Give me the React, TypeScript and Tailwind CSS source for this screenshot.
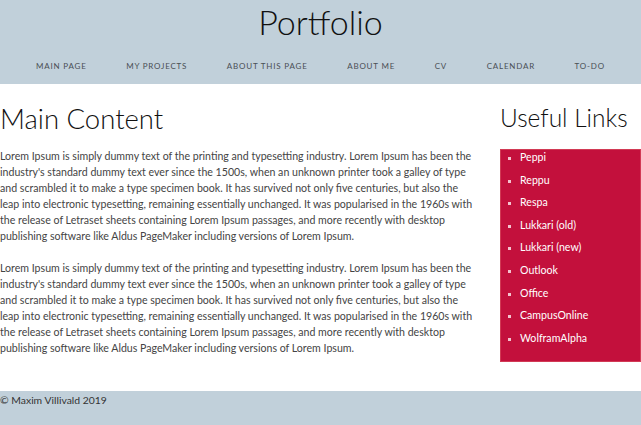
import React from 'react';

const navItems = ['Main page', 'My projects', 'About this page', 'About me', 'CV', 'Calendar', 'To-do'];

const links = ['Peppi', 'Reppu', 'Respa', 'Lukkari (old)', 'Lukkari (new)', 'Outlook', 'Office', 'CampusOnline', 'WolframAlpha'];

const lorem =
  "Lorem Ipsum is simply dummy text of the printing and typesetting industry. Lorem Ipsum has been the industry's standard dummy text ever since the 1500s, when an unknown printer took a galley of type and scrambled it to make a type specimen book. It has survived not only five centuries, but also the leap into electronic typesetting, remaining essentially unchanged. It was popularised in the 1960s with the release of Letraset sheets containing Lorem Ipsum passages, and more recently with desktop publishing software like Aldus PageMaker including versions of Lorem Ipsum.";

export default function App() {
  return (
    <div className="w-[641px] h-[425px] overflow-hidden bg-white text-[#333] font-['Lato','Liberation_Sans',sans-serif]">
      <header className="h-[84px] bg-[#c1d0da]">
        <h1 className="pt-[2px] text-center text-[34px] leading-[40px] font-light text-[#111]">Portfolio</h1>
        <nav className="mt-[18px] flex justify-between px-[36px] text-[8px] leading-[12px] tracking-[0.1em] uppercase text-[#4a4f55]">
          {navItems.map((n) => (
            <span key={n}>{n}</span>
          ))}
        </nav>
      </header>

      <div className="flex h-[307px]">
        <main className="w-[474px]">
          <h2 className="mt-[18px] text-[27.5px] leading-[34px] font-light text-[#111]">Main Content</h2>
          <p className="mt-[12px] text-[10.6px] leading-[16px] text-[#444]">{lorem}</p>
          <p className="mt-[16px] text-[10.6px] leading-[16px] text-[#444]">{lorem}</p>
        </main>
        <aside className="ml-auto w-[141px]">
          <h2 className="mt-[18px] text-[24.5px] leading-[32px] font-light text-[#111]">Useful Links</h2>
          <ul className="mt-[15px] bg-[#c3103c] border border-[#d23a55] pb-[8px] pl-[19px] list-[square] text-white text-[10.6px] leading-[14px]">
            {links.map((l) => (
              <li key={l} className="mb-[8.6px] marker:text-[8px] marker:text-[#f3c4cf]">{l}</li>
            ))}
          </ul>
        </aside>
      </div>

      <footer className="h-[34px] bg-[#c1d0da] pt-[2px] text-[10.4px] leading-[14px] text-[#333]">
        © Maxim Villivald 2019
      </footer>
    </div>
  );
}
